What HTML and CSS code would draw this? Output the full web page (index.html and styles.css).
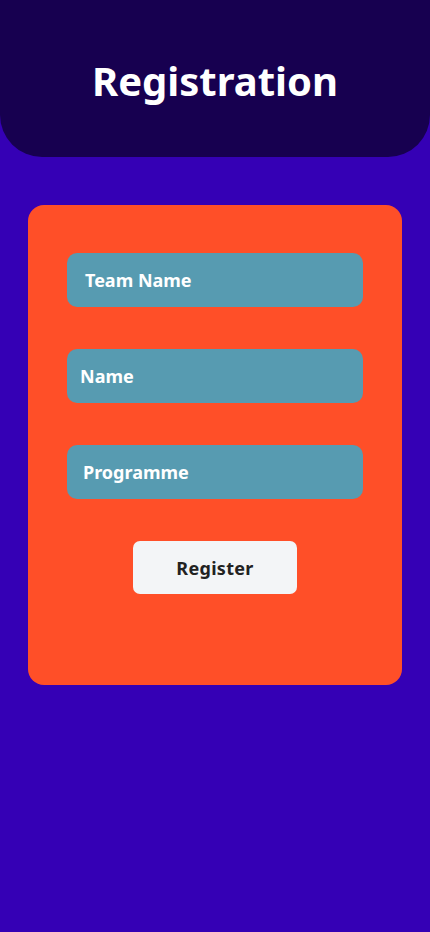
FILE: index.html
```html
<!DOCTYPE html>
<html>
<head>
<meta charset="utf-8">
<link rel="stylesheet" href="styles.css">
</head>
<body>
<header class="header"><h1 class="title">Registration</h1></header>
<main class="main">
  <form class="card">
    <div class="field field-team">Team Name</div>
    <div class="field field-name">Name</div>
    <div class="field field-prog">Programme</div>
    <div class="actions"><button type="button" class="btn">Register</button></div>
  </form>
</main>
</body>
</html>
```
FILE: styles.css
```css
html, body { margin: 0; padding: 0; }
body {
  background: #3500b5;
  font-family: "Noto Sans", sans-serif;
  width: 430px;
  min-height: 932px;
}
.header {
  background: #170050;
  height: 157px;
  border-radius: 0 0 42px 42px;
  display: flex;
  align-items: center;
  justify-content: center;
}
.title {
  margin: 0;
  color: #fff;
  font-size: 40px;
  font-weight: 700;
  line-height: 1;
  padding-top: 4px;
}
.main { padding: 48px 28px 0; }
.card {
  background: #ff4f28;
  border-radius: 16px;
  padding: 48px 39px 91px;
  display: flex;
  flex-direction: column;
  gap: 42px;
}
.field {
  height: 54px;
  background: #579bb1;
  border-radius: 10px;
  color: #fff;
  font-size: 18px;
  font-weight: 700;
  display: flex;
  align-items: center;
  box-sizing: border-box;
}
.field-team { padding-left: 18px; }
.field-name { padding-left: 13px; }
.field-prog { padding-left: 16px; }
.actions { display: flex; justify-content: center; }
.btn {
  width: 164px;
  height: 53px;
  border: 0;
  border-radius: 7px;
  background: #f3f5f7;
  color: #222;
  font-family: "Noto Sans", sans-serif;
  font-size: 18px;
  font-weight: 700;
  letter-spacing: 0.3px;
  padding: 0;
}
```
